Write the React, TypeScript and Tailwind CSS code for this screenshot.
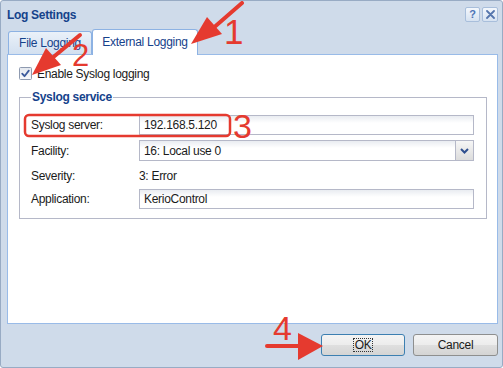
import React from "react";

const RED = "#e53a2f";

function Field({ children, className = "" }: { children?: React.ReactNode; className?: string }) {
  return (
    <div
      className={
        "flex-1 flex items-center border border-[#b5b8c8] bg-[linear-gradient(180deg,#e9ecf1_0px,#ffffff_7px)] " +
        className
      }
    >
      {children}
    </div>
  );
}

export default function App() {
  return (
    <div className="relative w-[503px] h-[368px] overflow-hidden bg-[#cfdbea] border border-[#98abc4] rounded-[3px] flex flex-col font-['Liberation_Sans',Arial,sans-serif] text-[12px] leading-[14px] tracking-[-0.3px] text-[#1b1b1b]">
      {/* Title bar */}
      <div className="h-[28px] flex items-start pl-[6px] pr-[4px]">
        <div className="mt-[7px] font-bold text-[#15428b] text-[12px]">Log Settings</div>
        <div className="ml-auto mt-[6px] flex gap-[2px]">
          <div className="w-[15px] h-[15px] rounded-[2px] border border-[#a8bedb] bg-[linear-gradient(180deg,#f3f7fc,#d6e2f1)] flex items-center justify-center text-[11px] font-bold text-[#4d74b7] leading-none tracking-normal">
            ?
          </div>
          <div className="w-[16px] h-[15px] rounded-[2px] border border-[#a8bedb] bg-[linear-gradient(180deg,#f3f7fc,#d6e2f1)] flex items-center justify-center">
            <svg width="9" height="9" viewBox="0 0 9 9">
              <path d="M1 1 L8 8 M8 1 L1 8" stroke="#5676ad" strokeWidth="1.8" strokeLinecap="round" />
            </svg>
          </div>
        </div>
      </div>

      {/* Tabs */}
      <div className="h-[25px] flex items-end pl-[7px]">
        <div className="w-[84px] h-[23px] border-t border-l border-r border-[#8db2e3] rounded-t-[3px] bg-[linear-gradient(180deg,#eaf1f9,#d3e0f0)] flex items-center justify-center text-[#15428b]">
          File Logging
        </div>
        <div className="relative z-10 w-[106px] h-[26px] -mb-[1px] border-t border-l border-r border-[#8db2e3] rounded-t-[3px] bg-white flex justify-center pt-[5px] text-[#15428b]">
          External Logging
        </div>
      </div>

      {/* Panel */}
      <div className="ml-[6px] w-[491px] h-[270px] border border-[#99bbe8] bg-white pl-[11px]">
        <div className="mt-[12px] flex items-center gap-[5px] h-[13px]">
          <svg width="13" height="13" viewBox="0 0 13 13">
            <defs>
              <linearGradient id="cb" x1="0" y1="0" x2="0" y2="1">
                <stop offset="0" stopColor="#e4e8ef" />
                <stop offset="1" stopColor="#f8f9fb" />
              </linearGradient>
            </defs>
            <rect x="0.5" y="0.5" width="12" height="12" rx="1" fill="url(#cb)" stroke="#8e9ab0" />
            <path d="M3.2 6.6 L5.5 9.2 L9.8 3.6" stroke="#3c5b9c" strokeWidth="1.8" fill="none" strokeLinecap="round" strokeLinejoin="round" />
          </svg>
          <span>Enable Syslog logging</span>
        </div>

        <fieldset className="mt-[10px] w-[468px] border border-[#b5b8c8] pl-[11px] pr-[12px] pt-[11px] pb-[9px]">
          <legend className="px-[1px] font-bold text-[#15428b] leading-[14px]">Syslog service</legend>

          <div className="flex items-center h-[20px]">
            <div className="w-[108px]">Syslog server:</div>
            <Field className="h-[20px] px-[4px]">192.168.5.120</Field>
          </div>

          <div className="flex items-center h-[21px] mt-[5px]">
            <div className="w-[108px]">Facility:</div>
            <Field className="h-[21px] pl-[4px]">
              <span className="flex-1">16: Local use 0</span>
              <div className="w-[18px] h-full border-l border-[#b5b8c8] bg-[linear-gradient(180deg,#f6f6f6,#dcdcdc)] flex items-center justify-center">
                <svg width="9" height="6" viewBox="0 0 9 6">
                  <path d="M1 1 L4.5 4.5 L8 1" stroke="#2f4f8f" strokeWidth="2" fill="none" />
                </svg>
              </div>
            </Field>
          </div>

          <div className="flex items-center h-[20px] mt-[5px]">
            <div className="w-[108px]">Severity:</div>
            <div>3: Error</div>
          </div>

          <div className="flex items-center h-[20px] mt-[3px]">
            <div className="w-[108px]">Application:</div>
            <Field className="h-[20px] px-[4px]">KerioControl</Field>
          </div>
        </fieldset>
      </div>

      {/* Footer buttons */}
      <div className="flex-1 flex justify-end items-start pt-[10px] pr-[4px] gap-[8px]">
        <div className="w-[84px] h-[22px] rounded-[3px] border border-[#3c7fb1] bg-[linear-gradient(180deg,#f4f4f4_0%,#ececec_50%,#dfdfdf_50%,#d4d4d4_100%)] flex items-center justify-center">
          <span className="outline outline-1 outline-dotted outline-[#333] px-[1px] leading-[12px]">OK</span>
        </div>
        <div className="w-[85px] h-[22px] rounded-[3px] border border-[#8e8f8f] bg-[linear-gradient(180deg,#f4f4f4_0%,#ececec_50%,#dfdfdf_50%,#d4d4d4_100%)] flex items-center justify-center">
          Cancel
        </div>
      </div>

      {/* Annotations */}
      <svg className="absolute left-0 top-0 pointer-events-none z-20" width="503" height="368" viewBox="0 0 503 368">
        {/* arrow 1 */}
        <line x1="241" y1="2" x2="210" y2="29" stroke={RED} strokeWidth="4" strokeLinecap="round" />
        <polygon points="190,43 221,33 206,16" fill={RED} />
        {/* arrow 2 */}
        <line x1="79" y1="34" x2="50" y2="58" stroke={RED} strokeWidth="4" strokeLinecap="round" />
        <polygon points="31,74 60,64 45,47" fill={RED} />
        {/* box 3 */}
        <rect x="24" y="114" width="205" height="21" rx="4" fill="none" stroke={RED} strokeWidth="2.5" />
        {/* arrow 4 */}
        <line x1="266" y1="345" x2="300" y2="345" stroke={RED} strokeWidth="4" strokeLinecap="round" />
        <polygon points="322,345 297,332 297,359" fill={RED} />
      </svg>
      <span className="absolute z-20 left-[223px] top-[13px] text-[35px] leading-[35px] tracking-normal text-[#e53a2f]">1</span>
      <span className="absolute z-20 left-[71px] top-[39px] text-[31px] leading-[31px] tracking-normal text-[#e53a2f]">2</span>
      <span className="absolute z-20 left-[232px] top-[108px] text-[34px] leading-[34px] tracking-normal text-[#e53a2f]">3</span>
      <span className="absolute z-20 left-[272px] top-[310px] text-[34px] leading-[34px] tracking-normal text-[#e53a2f]">4</span>
    </div>
  );
}
